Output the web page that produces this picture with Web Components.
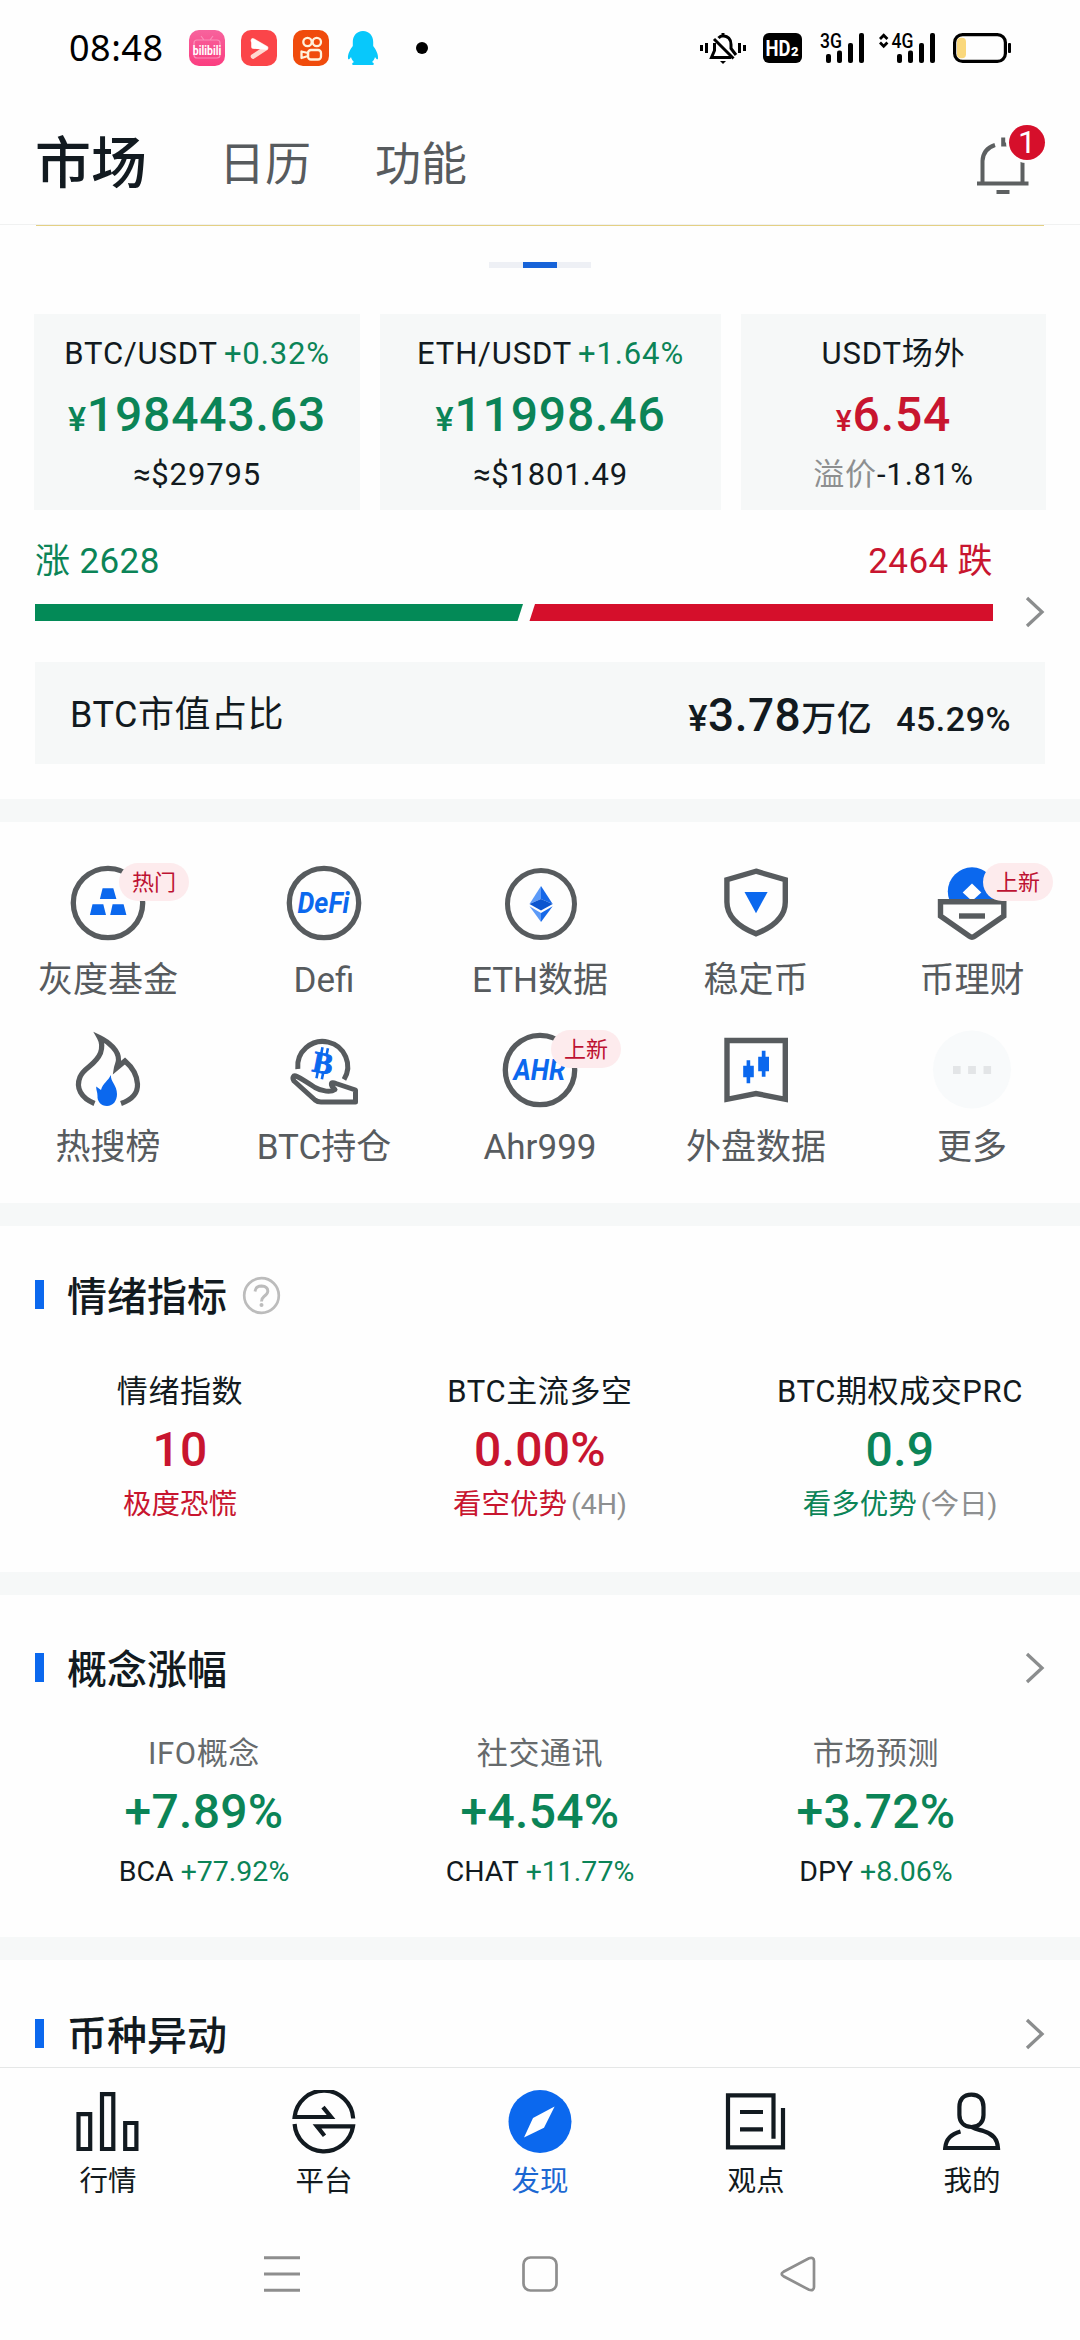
<!DOCTYPE html>
<html lang="zh-CN">
<head>
<meta charset="utf-8">
<title>市场</title>
<style>
html,body{margin:0;padding:0}
body{width:1080px;height:2340px;overflow:hidden;background:#fefefe;font-family:Roboto,"Noto Sans CJK SC",sans-serif;color:#121a20;
--green:#0b8457;--red:#c8152f;--blue:#0b68ee;--ink:#121a20;--grey:#575b5e;--mute:#8d8f90;--card:#f6f8f8;
display:flex;flex-direction:column}
</style>
</head>
<body>
<status-bar></status-bar>
<app-header></app-header>
<market-overview></market-overview>
<section-gap></section-gap>
<tool-grid></tool-grid>
<section-gap></section-gap>
<info-section top="47" heading="情绪指标" help>
  <stat-row slot="body" style="--g0:49px;--g1:10px;--g2:9px;--end:49px">
    <stat-col label="情绪指数" value="10" tone="red"><span style="color:var(--red)">极度恐慌</span></stat-col>
    <stat-col label="BTC主流多空" value="0.00%" tone="red"><span style="color:var(--red)">看空优势</span><span style="color:var(--mute);margin-left:4px">(4H)</span></stat-col>
    <stat-col label="BTC期权成交PRC" value="0.9" tone="green"><span style="color:var(--green)">看多优势</span><span style="color:var(--mute);margin-left:4px">(今日)</span></stat-col>
  </stat-row>
</info-section>
<section-gap></section-gap>
<info-section top="51" heading="概念涨幅" more>
  <stat-row slot="body" style="--g0:38px;--g1:10px;--g2:14px;--end:47px;--side:36px;--label:#666a6c">
    <stat-col label="IFO概念" value="+7.89%" tone="green"><span>BCA</span><span style="color:var(--green);margin-left:7px">+77.92%</span></stat-col>
    <stat-col label="社交通讯" value="+4.54%" tone="green"><span>CHAT</span><span style="color:var(--green);margin-left:7px">+11.77%</span></stat-col>
    <stat-col label="市场预测" value="+3.72%" tone="green"><span>DPY</span><span style="color:var(--green);margin-left:7px">+8.06%</span></stat-col>
  </stat-row>
</info-section>
<section-gap></section-gap>
<info-section top="52" heading="币种异动" more></info-section>
<tab-bar></tab-bar>
<system-nav></system-nav>

<script>
const define = (name, render) => customElements.define(name, class extends HTMLElement {
  constructor(){ super(); this.attachShadow({mode:'open'}); }
  connectedCallback(){ this.shadowRoot.innerHTML = render(this); }
});
const chevron = `<svg width="20" height="32" viewBox="0 0 20 32" fill="none" stroke="#8b8d8e" stroke-width="3.3"><path d="M2 2L17 16L2 30"/></svg>`;

define('status-bar', () => `
<style>
:host{display:flex;align-items:center;height:96px;flex:none;color:#000;box-sizing:border-box;padding:0 69px 0 69px}
svg{display:block;flex:none;overflow:visible}
.time{font:400 36px/44px "Noto Sans",sans-serif;letter-spacing:.5px;width:120px}
.sp{flex:1}
</style>
<div class="time">08:48</div>
<svg width="36" height="36" viewBox="0 0 36 36"><defs><linearGradient id="b" x2="0" y2="1"><stop offset="0" stop-color="#f7639d"/><stop offset="1" stop-color="#fb3d80"/></linearGradient></defs><rect width="36" height="36" rx="10" fill="url(#b)"/><path d="M12 6l3 4M24 6l-3 4M8 10h20q3 0 3 3v12q0 3-3 3H8q-3 0-3-3V13q0-3 3-3z" fill="none" stroke="#fa8db8" stroke-width="1.2"/><text transform="translate(18 24.500) scale(1 1.300)" text-anchor="middle" font-family="Roboto" font-weight="700" font-size="10.500" fill="#fff">bilibili</text></svg>
<svg style="margin-left:16px" width="36" height="36" viewBox="0 0 36 36"><rect width="36" height="36" rx="10" fill="#fb4549"/><path d="M12 10.500L25 18L12 26.500" fill="none" stroke="#ffd9d2" stroke-width="4.600" stroke-linejoin="round" stroke-linecap="round"/><path d="M12 10.500V17L25 18z" fill="#fff" stroke="#fff" stroke-width="3.500" stroke-linejoin="round"/></svg>
<svg style="margin-left:16px" width="36" height="36" viewBox="0 0 36 36"><rect width="36" height="36" rx="10" fill="#f04b0c"/><g fill="none" stroke="#fff2dc" stroke-width="2.300"><circle cx="14.500" cy="12" r="4.200"/><circle cx="23.800" cy="12" r="4.200"/><rect x="15" y="20" width="13" height="9.500" rx="3"/><path d="M8.500 21.500v6.500l6.500-2v-3z" stroke-linejoin="round"/></g></svg>
<svg style="margin-left:18px" width="32" height="36" viewBox="0 0 32 36"><path d="M16 1C9.500 1 5.800 6 5.800 12v4C3.500 19 .5 24 1 28.500c.2 1.500 1.500 1 3-1.500 .5 2 1.500 3.600 3 5-2 .6-2.500 2.700-1 3H26c1.500-.3 1-2.400-1-3 1.500-1.400 2.500-3 3-5 1.500 2.500 2.800 3 3 1.500C31.500 24 28.500 19 26.200 16v-4C26.200 6 22.500 1 16 1z" fill="#08c8fb"/></svg>
<svg style="margin-left:37px" width="12" height="12"><circle cx="6" cy="6" r="6"/></svg>
<div class="sp"></div>
<svg width="46" height="32" viewBox="0 0 46 32" fill="none" stroke="#000" stroke-width="3"><path d="M1.500 13v6M6.500 11v10M39.500 11v10M44.500 13v6"/><path d="M18.500 6Q20.500 3.800 23 3.800Q31 4.500 31 12.500V16.500L36 23M14.500 11V18.500L11.500 25.500H31M14 7L33.500 26.500M23 1v3"/><path d="M20 29h6l-3 3z" fill="#000" stroke="none"/></svg>
<svg style="margin-left:17px" width="39" height="30" viewBox="0 0 39 30"><rect width="39" height="30" rx="6"/><text x="2.500" y="23" font-family="Roboto" font-weight="700" font-size="22" fill="#fff" textLength="25" lengthAdjust="spacingAndGlyphs">HD</text><text x="28" y="22.500" font-family="Roboto" font-weight="900" font-size="13" fill="#fff">2</text></svg>
<svg style="margin-left:18px" width="45" height="46" viewBox="0 -8 45 46"><text transform="translate(0 14.500) scale(.9 1)" font-family="Roboto" font-weight="500" font-size="19.500">3G</text><rect x="6" y="21" width="5" height="9" rx="2"/><rect x="17" y="17.500" width="5" height="12.500" rx="2"/><rect x="28" y="10" width="5" height="20" rx="2"/><rect x="39" y="0" width="5" height="30" rx="2"/></svg>
<svg style="margin-left:14px" width="57" height="46" viewBox="0 -8 57 46"><path d="M1 6l3.700-3.700L8.400 6M1 9.500l3.700 3.700L8.400 9.500" fill="none" stroke="#000" stroke-width="2.800"/><text transform="translate(12.500 14.500) scale(.9 1)" font-family="Roboto" font-weight="500" font-size="19.500">4G</text><rect x="18" y="21" width="5" height="9" rx="2"/><rect x="29" y="17.500" width="5" height="12.500" rx="2"/><rect x="40" y="10" width="5" height="20" rx="2"/><rect x="51" y="0" width="5" height="30" rx="2"/></svg>
<svg style="margin-left:17px" width="58" height="30" viewBox="0 0 58 30"><rect x="1.600" y="1.600" width="50.800" height="26.800" rx="8" fill="none" stroke="#000" stroke-width="3.200"/><rect x="4" y="4.700" width="9" height="20.600" rx="4" fill="#fad87c"/><rect x="55" y="10" width="3" height="10" rx="1"/></svg>
`);

define('app-header', () => `
<style>
:host{display:flex;align-items:center;height:129px;flex:none;box-sizing:border-box;padding:8px 32px 0 35px;border-bottom:1px solid #f0f1f1;color:var(--grey)}
.t{font-size:46px;line-height:60px;width:93px}
.on{font-size:56px;font-weight:500;color:var(--ink);width:184px}
.sp{flex:1}
.bell{position:relative;width:71px;height:70px;margin-top:-10px}
.bell svg{display:block}
.n{position:absolute;left:32px;top:1px;width:36px;height:35px;border-radius:50%;background:#d60f2b;color:#fff;font-size:32px;line-height:34px;text-align:center;box-shadow:0 0 0 3px #fefefe}
</style>
<div class="t on">市场</div><div class="t" style="width:156px">日历</div><div class="t">功能</div><div class="sp"></div>
<div class="bell"><svg width="71" height="72" viewBox="0 0 71 72" fill="none" stroke="#5d6061" stroke-width="4"><path d="M0 59.500H51.500M19.500 68H32.500M5.500 59V37Q6 25 18 21M45.500 59V34M26.200 13.500V22.500M26 20.500h4"/></svg><div class="n">1</div></div>
`);

define('ticker-card', el => `
<style>
:host{display:block;background:var(--card);height:196px;box-sizing:border-box;padding-top:18px;text-align:center;font-size:31px;line-height:43px;letter-spacing:.85px;white-space:nowrap}
.p{font-size:48px;line-height:60px;height:60px;margin:10px 0 8px;font-weight:500;color:var(--${el.getAttribute('tone')})}
.y{font-size:${el.getAttribute('yen')}px;line-height:0}
</style>
<div><slot name="pair"></slot></div><div class="p"><span class="y">¥</span>${el.getAttribute('price')}</div><div><slot name="sub"></slot></div>
`);

define('market-overview', () => `
<style>
:host{display:block;flex:none;padding:0 0 35px}
.rule{height:1px;margin:0 36px;background:#e4d083}
.dots{display:flex;width:102px;height:6px;margin:36px auto 0;background:#eef0f5;justify-content:center}
.dots i{width:34px;background:#1763d8}
.cards{display:grid;grid-template-columns:326px 341px 305px;gap:20px;margin:46px 0 0 34px}
.g{color:var(--green)}
.cnt{display:flex;justify-content:space-between;margin:30px 87px 0 35px;font-size:35px;line-height:44px;letter-spacing:.4px}
.bar{display:flex;align-items:center;margin:12px 35px 0 35px;height:32px}
.bar svg{display:block}
.cap{display:flex;align-items:center;height:102px;box-sizing:border-box;margin:34px 35px 0;padding:4px 34px 0 35px;background:var(--card);font-size:36px;line-height:60px;letter-spacing:.5px}
.r{margin-left:auto;font-weight:500;font-size:46px;height:60px}
.r span{font-size:34px;line-height:0}
</style>
<div class="rule"></div><div class="dots"><i></i></div>
<div class="cards">
<ticker-card tone="green" yen="34" price="198443.63"><span slot="pair">BTC/USDT<span class="g" style="margin-left:6px">+0.32%</span></span><span slot="sub">≈$29795</span></ticker-card>
<ticker-card tone="green" yen="34" price="11998.46"><span slot="pair">ETH/USDT<span class="g" style="margin-left:6px">+1.64%</span></span><span slot="sub">≈$1801.49</span></ticker-card>
<ticker-card tone="red" yen="30" price="6.54"><span slot="pair">USDT场外</span><span slot="sub"><span style="color:var(--mute)">溢价</span>-1.81%</span></ticker-card>
</div>
<div class="cnt"><span class="g">涨 2628</span><span style="color:var(--red)">2464 跌</span></div>
<div class="bar"><svg width="958" height="17"><path d="M0 0H488L482.500 17H0z" fill="#038a57"/><path d="M500 0H958V17H494.500z" fill="#d50f2b"/></svg><div style="flex:1"></div>${chevron}</div>
<div class="cap"><div>BTC市值占比</div><div class="r"><span style="font-size:36px">¥</span>3.78<span style="font-size:35px">万亿</span><span style="margin-left:24px">45.29%</span></div></div>
`);

define('section-gap', () => `<style>:host{display:block;flex:none;height:23px;background:#f6f8f8}</style>`);

define('tool-item', el => `
<style>
:host{display:flex;flex-direction:column;align-items:center;color:var(--grey);font-size:35px;line-height:40px;white-space:nowrap}
.i{position:relative;width:80px;height:80px;margin-bottom:18px}
.b{position:absolute;left:51px;top:0;width:70px;height:38px;border-radius:19px;background:#fdebed;color:#bd1232;font-size:22px;line-height:40px;text-align:center}
</style>
<div class="i"><slot></slot>${el.hasAttribute('badge') ? `<div class="b">${el.getAttribute('badge')}</div>` : ''}</div><div>${el.getAttribute('label')}</div>
`);

const ring = '<circle cx="40" cy="40" r="34.700" stroke="#575b5e" stroke-width="5.300" fill="none"/>';
const word = t => `<text x="13.500" y="50" font-family="Roboto" font-style="italic" font-weight="700" font-size="30" fill="#0b68ee" textLength="52" lengthAdjust="spacingAndGlyphs">${t}</text>`;
const tools = [
 ['灰度基金','热门', ring+'<path fill="#0b68ee" d="M34.600 25.300H45.300L48.400 36H31.900zM24.500 41.300H35.300L38 52H21.900zM44.600 41.300H55.600L58.400 52H42.200z"/>'],
 ['Defi','', ring+word('DeFi')],
 ['ETH数据','', '<circle cx="41" cy="41" r="33.500" stroke="#575b5e" stroke-width="5" fill="none"/><path fill="#5b9af8" d="M41 23L29.500 41L41 36z"/><path fill="#1668e8" d="M41 23L52.700 41L41 36z"/><path fill="#0b55cf" d="M29.500 41L41 36L52.700 41L41 47.500z"/><path fill="#5b9af8" d="M29.500 43.300L41 50V59z"/><path fill="#1668e8" d="M52.700 43.300L41 50V59z"/>'],
 ['稳定币','', '<path fill="none" stroke="#575b5e" stroke-width="5.400" d="M40 8.200L69.300 16.700V39C69.300 54 57 64 40 70.800C23 64 10.900 54 10.900 39V16.700z"/><path fill="#0b68ee" d="M28.500 29H51.600L40 50.300z"/>'],
 ['币理财','上新', '<circle cx="40" cy="28.500" r="24.200" fill="#0b68ee"/><path fill="#fff" d="M40 20.500L49.300 29.500L40 38L30.700 29.500z"/><path fill="#fefefe" stroke="#575b5e" stroke-width="5.400" d="M8.500 38.800H71.800V53L42.500 73.300Q40 75 37.500 73.300L8.500 53z"/><path stroke="#575b5e" stroke-width="5.400" d="M27 53H53"/>'],
 ['热搜榜','', '<path fill="none" stroke="#575b5e" stroke-width="5.200" d="M26.500 73.500C13 68 7.500 58 12 47C16 37 27 36 32.500 23C34.500 17 34 12 31.500 7.500C41 12 51 21 50.500 30C50.400 33 49 35 48.500 38L57 31C64 37 69 45 69.500 54C70 64 63 70 53 73.500"/><path fill="#0b68ee" d="M42.900 45C42.500 52 49 55 49 64C49 71 45 76 39 76C33 76 29 71 29.500 66C29.500 62 28 60 28.200 56.500L33 60C35 53 40 51 42.900 45z"/>'],
 ['BTC持仓','', '<g fill="none" stroke="#575b5e" stroke-width="5"><path d="M13.800 39A25 25 0 1 1 60 49.500"/><path stroke-linejoin="round" d="M13 46.500C9 44.500 8 48 10 51L31 70Q33.500 72 37 72H71.500V60L52 53.500C46 51 46 55 51 59.500C47 62.500 38 61.500 31 57.500C25 53.500 18 49 13 46.500z"/></g><g transform="rotate(11 38 33)"><text x="29" y="43" font-family="Liberation Serif" font-weight="700" font-size="30" fill="#0b68ee" stroke="#0b68ee" stroke-width="1">B</text><path d="M35.500 17.500V24M41 17.500V24M35.500 42V49M41 42V49" stroke="#0b68ee" stroke-width="2.600"/></g>'],
 ['Ahr999','上新', ring+word('AHR')],
 ['外盘数据','', '<path fill="none" stroke="#575b5e" stroke-width="5.400" d="M11 10.500H69.300V69.300L40 63.500L11 69.300z"/><path fill="#0b68ee" d="M27.200 35.700H37.800V47.300H27.200zM30.600 30.300H34.200V53.300H30.600zM42.200 26.700H53V41.300H42.200zM45.800 20.700H49.500V46.700H45.800z"/>'],
 ['更多','', '<circle cx="40" cy="39.500" r="39" fill="#f8fafb"/><path fill="#e3e5e7" d="M21 36h7.600v8H21zM36.100 36h7.800v8h-7.800zM51.500 36h7.600v8h-7.600z"/>']
];
define('tool-grid', () => `
<style>:host{display:grid;flex:none;grid-template-columns:repeat(5,216px);row-gap:29px;padding:41px 0 35px}svg{display:block}</style>
${tools.map(([l,b,s]) => `<tool-item label="${l}"${b?` badge="${b}"`:''}><svg width="80" height="80" viewBox="0 0 80 80">${s}</svg></tool-item>`).join('')}
`);

define('info-section', el => `
<style>
:host{display:block;flex:none;padding-top:${el.getAttribute('top')}px}
.h{display:flex;align-items:center;height:50px;margin:0 35px;font-size:40px;line-height:50px;font-weight:500}
.h i{width:9px;height:29px;background:var(--blue);margin:0 23px 7px 0}
.h svg{display:block;margin-bottom:6px}
.sp{flex:1}
</style>
<div class="h"><i></i><span>${el.getAttribute('heading')}</span>
${el.hasAttribute('help') ? '<svg style="margin-left:15px" width="39" height="39" viewBox="0 0 39 39"><circle cx="19.500" cy="19.500" r="17.300" fill="none" stroke="#bcbcbc" stroke-width="2.700"/><path d="M13 15.500Q13.500 10 19.500 10Q26 10.500 25.800 15.300Q25.500 18 22 20.500Q19.500 22.500 19.500 25.500" fill="none" stroke="#bcbcbc" stroke-width="2.900"/><circle cx="19.500" cy="29" r="2" fill="#bcbcbc"/></svg>' : ''}
<div class="sp"></div>${el.hasAttribute('more') ? chevron : ''}</div>
<slot name="body"></slot>
`);

define('stat-row', () => `<style>:host{display:grid;grid-template-columns:repeat(3,1fr);padding:var(--g0) var(--side,0px) var(--end)}</style><slot></slot>`);

define('stat-col', el => `
<style>
:host{display:block;text-align:center;white-space:nowrap}
.l{font-size:31px;line-height:40px;letter-spacing:.6px;color:var(--label,var(--ink))}
.v{font-size:48px;line-height:56px;font-weight:500;letter-spacing:.3px;margin:var(--g1) 0 var(--g2);color:var(--${el.getAttribute('tone')})}
.s{font-size:28.500px;line-height:36px}
</style>
<div class="l">${el.getAttribute('label')}</div><div class="v">${el.getAttribute('value')}</div><div class="s"><slot></slot></div>
`);

define('tab-item', el => `
<style>
:host{display:flex;flex-direction:column;align-items:center;font-size:28.500px;line-height:36px;color:${el.hasAttribute('active') ? '#1b68d2' : 'var(--ink)'}}
</style>
<slot></slot><div style="margin-top:10px">${el.getAttribute('label')}</div>
`);
const tabs = [
 ['行情','<path d="M2.500 24.200H14.200V59H2.500zM26 4.200H37.300V59H26zM49.200 33H60.400V59H49.200z"/>'],
 ['平台','<path d="M61.200 28.500A29.400 29.400 0 0 0 2.600 27H39L31 17.200M2.600 34A29.400 29.400 0 0 0 61 36.400H25L32.500 45.700"/>'],
 ['发现','<circle cx="32" cy="31.500" r="31.500" fill="#0b68ee" stroke="none"/><path d="M16 47.500L25 28L46.600 16.600L36 37.800z" fill="#fff" stroke="none"/>'],
 ['观点','<path d="M49.500 48.700V5.300H4V57.300H59V18M16 22H39M16 39.300H39"/>'],
 ['我的','<path d="M31.500 4.700C40 4.700 43.500 10 43.500 17V25C43.500 32 39 37 31.500 37S19.400 32 19.400 25V17C19.400 10 23 4.700 31.500 4.700zM20.500 41.500C11 44 5.800 50 5.200 58H58C57.500 49 52 43.500 44 41.200C39 39.700 35 39 31.500 37"/>']
];
define('tab-bar', () => `
<style>:host{display:grid;flex:none;grid-template-columns:repeat(5,216px);border-top:1px solid #e5e7e7;margin-top:5px;padding-top:22px;height:109px;background:#fefefe}svg{display:block}</style>
${tabs.map(([l,s],i) => `<tab-item label="${l}"${i===2?' active':''}><svg width="64" height="64" viewBox="0 0 64 64" fill="none" stroke="#121a20" stroke-width="4.200">${s}</svg></tab-item>`).join('')}
`);

define('system-nav', () => `
<style>:host{display:flex;flex:1;align-items:center;justify-content:space-between;padding:8px 264px 0}svg{display:block}</style>
<svg width="36" height="36" viewBox="0 0 36 36" stroke="#8e8e8e" stroke-width="3"><path d="M0 1.700H36M0 18H36M0 34.300H36"/></svg>
<svg width="36" height="36" viewBox="0 0 36 36"><rect x="1.500" y="1.500" width="33" height="33" rx="7" fill="none" stroke="#8e8e8e" stroke-width="2.700"/></svg>
<svg width="36" height="36" viewBox="0 0 36 36"><path d="M3.500 15.800L29 2.200Q34 .8 34 5V31Q34 35.200 29 33.800L3.500 20.200Q-.2 18 3.500 15.800z" fill="none" stroke="#8e8e8e" stroke-width="2.700"/></svg>
`);
</script>
</body>
</html>
